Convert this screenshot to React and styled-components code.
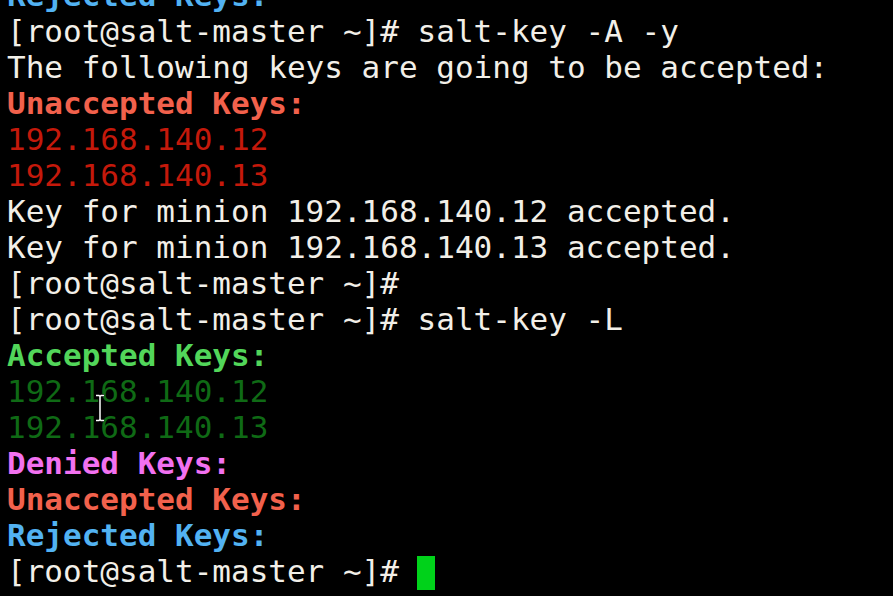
import React from "react";
import styled, { createGlobalStyle } from "styled-components";

const GlobalStyle = createGlobalStyle`
  html, body {
    margin: 0;
    padding: 0;
    background: #000;
    overflow: hidden;
  }
`;

const colors = {
  plain: "#f2efe8",
  redBold: "#f2614c",
  red: "#c4190b",
  greenBold: "#52d65a",
  green: "#0f6a15",
  magenta: "#f271f0",
  blue: "#52b2f2",
};

const lines = [
  { text: "Rejected Keys:", tone: "blue", bold: true },
  { text: "[root@salt-master ~]# salt-key -A -y" },
  { text: "The following keys are going to be accepted:" },
  { text: "Unaccepted Keys:", tone: "redBold", bold: true },
  { text: "192.168.140.12", tone: "red" },
  { text: "192.168.140.13", tone: "red" },
  { text: "Key for minion 192.168.140.12 accepted." },
  { text: "Key for minion 192.168.140.13 accepted." },
  { text: "[root@salt-master ~]#" },
  { text: "[root@salt-master ~]# salt-key -L" },
  { text: "Accepted Keys:", tone: "greenBold", bold: true },
  { text: "192.168.140.12", tone: "green" },
  { text: "192.168.140.13", tone: "green" },
  { text: "Denied Keys:", tone: "magenta", bold: true },
  { text: "Unaccepted Keys:", tone: "redBold", bold: true },
  { text: "Rejected Keys:", tone: "blue", bold: true },
];

const Terminal = styled.div`
  position: relative;
  width: 893px;
  height: 596px;
  background: #000;
  overflow: hidden;
`;

const Screen = styled.pre`
  margin: -23px 0 0 0;
  padding: 0 0 0 7px;
  font-family: "DejaVu Sans Mono", "Liberation Mono", monospace;
  font-size: 31px;
  line-height: 36px;
  color: ${colors.plain};
`;

const Line = styled.div`
  white-space: pre;
  color: ${(p) => colors[p.$tone] || colors.plain};
  font-weight: ${(p) => (p.$bold ? 700 : 400)};
`;

const Cursor = styled.span`
  display: inline-block;
  width: 18px;
  height: 34px;
  margin-left: 18px;
  background: #00d21a;
  vertical-align: -8px;
`;

const Pointer = styled.svg`
  position: absolute;
  left: 94px;
  top: 394px;
`;

export default function App() {
  return (
    <>
      <GlobalStyle />
      <Terminal>
        <Screen>
          {lines.map((l, i) => (
            <Line key={i} $tone={l.tone} $bold={l.bold}>
              {l.text}
            </Line>
          ))}
          <Line>
            [root@salt-master ~]#<Cursor />
          </Line>
        </Screen>
        <Pointer width="12" height="28" viewBox="0 0 12 28">
          <path
            d="M2 1.5h3l1 1 1-1h3M6 2.5v23M2 26.5h3l1-1 1 1h3"
            stroke="#000"
            strokeWidth="3"
            fill="none"
          />
          <path
            d="M2 1.5h3l1 1 1-1h3M6 2.5v23M2 26.5h3l1-1 1 1h3"
            stroke="#fff"
            strokeWidth="1.5"
            fill="none"
          />
        </Pointer>
      </Terminal>
    </>
  );
}
